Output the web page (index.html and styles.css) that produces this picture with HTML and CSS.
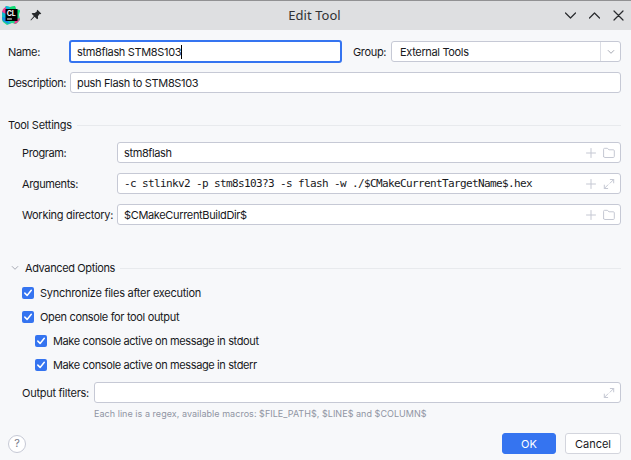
FILE: index.html
```html
<!DOCTYPE html>
<html lang="en">
<head>
<meta charset="utf-8">
<title>Edit Tool</title>
<link rel="stylesheet" href="styles.css">
</head>
<body>
<svg width="0" height="0" class="defs">
  <symbol id="plus" viewBox="0 0 12 12"><path d="M6 1.500v9M1.500 6h9"/></symbol>
  <symbol id="folder" viewBox="0 0 12 12"><path d="M.6 9.500v-7.200q0-1 1-1h2.700l1.700 1.500h4.300q1 0 1 1v5.700q0 1-1 1h-8.700q-1 0-1-1z"/></symbol>
  <symbol id="expand" viewBox="0 0 12 12"><path d="M7.300 1.500h3.400v3.400M10.500 1.700 7 5.200M1.300 7.100v3.400h3.400M1.500 10.300 5 6.800"/></symbol>
  <symbol id="chevron" viewBox="0 0 8 8"><path d="M1.200 2.500 4 5.300l2.800-2.800"/></symbol>
  <symbol id="tick" viewBox="0 0 12 12"><path d="M2.800 6.100 5.100 8.400 9.300 3.300"/></symbol>
</svg>
<div class="dialog">
  <header class="titlebar">
    <svg class="logo" viewBox="0 0 20 20">
      <path fill="#20d68a" d="M1 8 5 1l4 1 5-1 1 3 4 1-1 5 1 5-4 4-4-1-5 2-4-3-1-2z"/>
      <path fill="#0bb8d8" d="m1 7 4-6 4 1-3 12 4 4-3 1-5-4z"/>
      <path fill="#1988e8" d="m1 12 4 1 3 6-6-3z"/>
      <path fill="#ed3d91" d="m1 7 1-3 3-2v7zM14 16l4-3 1 1-3 4-3 1z"/>
      <path fill="#10dc72" d="m9 2 5-1 1 4 4 1-2 4-3-6H9z"/>
      <path fill="#000" d="M4.500 4h12v12h-12z"/>
      <path fill="none" stroke="#fff" stroke-width="1" d="M6.500 14h4"/>
      <text x="5.700" y="10.600">CL</text>
    </svg>
    <svg class="pin" viewBox="0 0 12 12"><path d="m7.400.8 3.900 3.700-1 .7-.7-.2-1.700 2.200.2 2.200-1 .9-2.500-2.500L1 11.400l-.5-.4 3.400-3.900-2.300-2.300.9-.9 2.300.2 2.200-1.800-.2-.7z"/></svg>
    <h1>Edit Tool</h1>
    <svg class="window-controls" viewBox="0 0 60 14"><path d="m1.500 5 5 5 5-5M25.500 10l5-5 5 5M50 3l9 9M59 3l-9 9"/></svg>
  </header>
  <main>
    <div class="row name-row">
      <label class="name-label">Name:</label>
      <div class="field focused"><span>stm8flash STM8S103</span><i class="caret"></i></div>
      <label class="group-label">Group:</label>
      <div class="field select"><span>External Tools</span><b><svg class="chev"><use href="#chevron"/></svg></b></div>
    </div>
    <div class="row description-row">
      <label class="tight">Description:</label>
      <div class="field"><span>push Flash to STM8S103</span></div>
    </div>
    <div class="section settings"><span class="loose">Tool Settings</span><hr></div>
    <div class="settings-grid">
      <label class="tight">Program:</label>
      <div class="field"><span class="tight">stm8flash</span><svg class="icon"><use href="#plus"/></svg><svg class="icon"><use href="#folder"/></svg></div>
      <label class="tight">Arguments:</label>
      <div class="field"><span class="mono">-c stlinkv2 -p stm8s103?3 -s flash -w ./$CMakeCurrentTargetName$.hex</span><svg class="icon"><use href="#plus"/></svg><svg class="icon"><use href="#expand"/></svg></div>
      <label class="loose">Working directory:</label>
      <div class="field"><span>$CMakeCurrentBuildDir$</span><svg class="icon"><use href="#plus"/></svg><svg class="icon"><use href="#folder"/></svg></div>
    </div>
    <div class="section advanced"><svg class="chev"><use href="#chevron"/></svg><span class="tight">Advanced Options</span><hr></div>
    <div class="checks">
      <label><svg><use href="#tick"/></svg><span class="loose">Synchronize files after execution</span></label>
      <label><svg><use href="#tick"/></svg><span>Open console for tool output</span></label>
      <label class="nested"><svg><use href="#tick"/></svg><span class="tight">Make console active on message in stdout</span></label>
      <label class="nested"><svg><use href="#tick"/></svg><span class="tight">Make console active on message in stderr</span></label>
    </div>
    <div class="row output-row">
      <label class="loose">Output filters:</label>
      <div class="field"><svg class="icon"><use href="#expand"/></svg></div>
    </div>
    <p class="hint">Each line is a regex, available macros: $FILE_PATH$, $LINE$ and $COLUMN$</p>
    <footer>
      <button class="help">?</button>
      <button class="ok">OK</button>
      <button class="cancel">Cancel</button>
    </footer>
  </main>
</div>
</body>
</html>
```
FILE: styles.css
```css
* { box-sizing: border-box; }
body { margin: 0; font: 11px/14px Inter, sans-serif; letter-spacing: -.34px; color: #17181c; background: #f7f8fa; }
.tight { letter-spacing: -.38px; }
.loose { letter-spacing: -.27px; }
.defs { position: absolute; }
.dialog { width: 631px; height: 460px; overflow: hidden; }
svg { display: block; flex: none; fill: none; stroke-linecap: round; stroke-linejoin: round; }
.titlebar { height: 30px; border-top: 1px solid #919193; background: #dedfe1; display: flex; align-items: center; padding: 0 7px 2px 1px; }
.logo { width: 20px; height: 20px; }
.logo text { font: bold 7px Inter, sans-serif; letter-spacing: 0; fill: #fff; }
.pin { width: 12px; height: 12px; margin-left: 9px; fill: #26282b; }
h1 { flex: 1; margin: 0 0 0 14px; text-align: center; font: 13px/18px "Noto Sans", sans-serif; letter-spacing: .05px; color: #303134; padding-left: 9px; }
.window-controls { width: 60px; height: 14px; stroke: #292b2e; stroke-width: 1.200; }
main { padding: 11px 10px 0 8px; white-space: nowrap; }
.row { display: flex; align-items: center; height: 21px; }
.field { height: 21px; min-width: 0; flex: 1; display: flex; align-items: center; background: #fff; border: 1px solid #c6c9d5; border-radius: 3px; padding: 0 5px 0 6px; }
.field > span { flex: none; }
.name-label { width: 61px; }
.name-row .focused { flex: 0 0 273px; height: 23px; border: 2px solid #3574f0; padding-left: 6px; }
.caret { width: 1px; height: 14px; background: #000; }
.group-label { width: 49px; padding-left: 11px; }
.select { padding: 0 0 0 8px; }
.select b { margin-left: auto; width: 20px; height: 19px; border-left: 1px solid #dcdee5; display: flex; align-items: center; justify-content: center; }
.chev { width: 8px; height: 8px; stroke: #a6a9b3; }
.description-row { margin-top: 10px; }
.description-row label { width: 62px; }
.section { display: flex; align-items: center; height: 14px; }
.section hr { flex: 1; height: 1px; border: 0; margin: 0 0 0 5px; background: #e8eaed; }
.settings { margin-top: 25px; }
.settings-grid { margin: 10px 0 0 14px; display: grid; grid-template-columns: 95px 1fr; row-gap: 10px; align-items: center; }
.icon { width: 12px; height: 12px; stroke: #c5c8d3; stroke-width: 1; margin-left: 6px; }
.field .icon:first-of-type { margin-left: auto; }
.field .mono { font: 11px/14px "DejaVu Sans Mono", monospace; letter-spacing: -.622px; }
.advanced { margin-top: 36px; padding-left: 3px; }
.advanced span { margin-left: 6px; }
.checks { margin: 6px 0 0 14px; }
.checks label { height: 24px; display: flex; align-items: center; gap: 6px; }
.checks .nested { margin-left: 13px; }
.checks svg { width: 12px; height: 12px; border-radius: 2px; background: #3574f0; stroke: #fff; stroke-width: 1.500; }
.output-row { margin: 5px 0 0 14px; }
.output-row label { width: 72px; }
.hint { margin: 4px 0 0 86px; font-size: 9px; line-height: 14px; letter-spacing: .04px; color: #9095a3; }
footer { display: flex; align-items: center; margin-top: 12px; height: 21px; }
button { font: inherit; letter-spacing: 0; padding: 0; height: 21px; color: #17181c; background: #fff; border: 1px solid #d3d5dd; border-radius: 3px; }
.help { width: 18px; height: 18px; border-radius: 50%; border-color: #c6c9d5; color: #777b88; line-height: 15px; }
.ok { margin-left: auto; width: 54px; background: #3574f0; border-color: #3574f0; color: #fff; }
.cancel { width: 56px; margin-left: 9px; }
```
